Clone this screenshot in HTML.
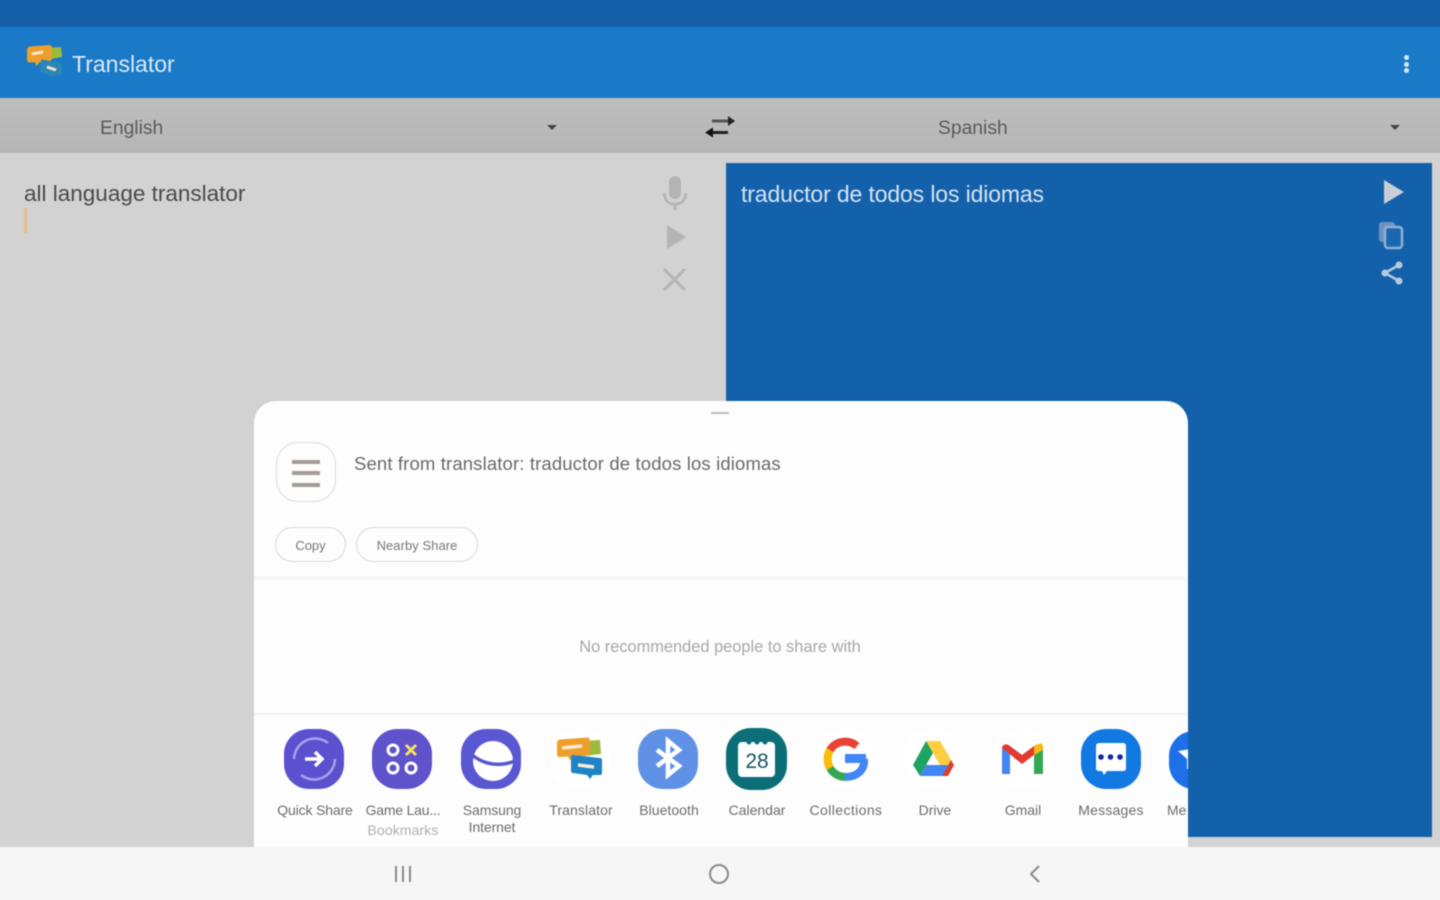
<!DOCTYPE html>
<html>
<head>
<meta charset="utf-8">
<style>
html,body{margin:0;padding:0;width:1440px;height:900px;overflow:hidden;background:#d2d2d2;font-family:"Liberation Sans",sans-serif}
#root{position:relative;width:1440px;height:900px;filter:blur(.65px)}
.a{position:absolute}
.t{position:absolute;white-space:nowrap;line-height:1}
.lbl{position:absolute;font-size:14px;color:#6d6d6d;text-align:center;width:90px;line-height:17px;white-space:nowrap}
</style>
</head>
<body>
<div id="root">
<div class="a" style="left:-10px;top:-10px;width:1460px;height:37px;background:#1560a8"></div>
<div class="a" style="left:-10px;top:27px;width:1460px;height:71px;background:#1a7ac8"></div>
<div class="a" style="left:-10px;top:98px;width:1460px;height:55px;background:linear-gradient(#bdbdbd,#b6b6b8)"></div>
<div class="a" style="left:-10px;top:153px;width:1460px;height:700px;background:#d2d2d2"></div>
<div class="a" style="left:726px;top:163px;width:706px;height:674px;background:#1461ab"></div>

<svg class="a" style="left:24px;top:42px" width="40" height="40" viewBox="0 0 40 40">
<path d="M22 6l15-1 1 10-12 2z" fill="#9abb3c"/>
<path d="M3 8q0-3 3-3.500L25 3q3 0 3 3v10q0 3-3 3l-9 1-4 4-1-4-5 .5q-3 0-3-3z" fill="#ee9f2b"/>
<path d="M17 19q0-2 2-1.500L36 21q2 .5 2 2v8q0 2-2 2h-6l-3 3-2-3-7-2q-2-.5-2-2z" fill="#2b88b4"/>
<path d="M8 12l11-2M23 25l9 3" stroke="#f4e6c8" stroke-width="3" fill="none"/>
</svg>
<div class="t" style="left:72px;top:53px;font-size:23px;color:#dbe9f5">Translator</div>
<div class="a" style="left:1404px;top:55px;width:5px;height:5px;border-radius:50%;background:#d9e6f2"></div>
<div class="a" style="left:1404px;top:62px;width:5px;height:5px;border-radius:50%;background:#d9e6f2"></div>
<div class="a" style="left:1404px;top:68px;width:5px;height:5px;border-radius:50%;background:#d9e6f2"></div>

<div class="t" style="left:100px;top:118.500px;font-size:19.300px;color:#5b5b5b">English</div>
<div class="a" style="left:547px;top:125px;border:5px solid transparent;border-top:5px solid #444;border-bottom:0"></div>
<svg class="a" style="left:702px;top:112px" width="36" height="30" viewBox="0 0 36 30">
<path d="M10 9h20" stroke="#555" stroke-width="3"/><path d="M26 4l7 5-7 5z" fill="#222"/>
<path d="M6 20.500h20" stroke="#222" stroke-width="3"/><path d="M11 15.500l-8 5 8 5z" fill="#111"/>
</svg>
<div class="t" style="left:938px;top:118.500px;font-size:19.300px;color:#5b5b5b">Spanish</div>
<div class="a" style="left:1390px;top:125px;border:5px solid transparent;border-top:5px solid #444;border-bottom:0"></div>

<div class="t" style="left:24px;top:183px;font-size:22.500px;color:#4a4a4a">all language translator</div>
<div class="a" style="left:24px;top:208px;width:3px;height:25px;background:#e8bd86"></div>

<svg class="a" style="left:660px;top:174px" width="30" height="120" viewBox="0 0 30 120" fill="#b4b4b4">
<rect x="9" y="2" width="12" height="23" rx="6"/>
<path d="M4 19q1 11 11 11t11-11" fill="none" stroke="#b4b4b4" stroke-width="2.500"/>
<rect x="13.500" y="29" width="3" height="7"/>
<path d="M7 51l19 12-19 12z"/>
<path d="M4 95l21 21M25 95L4 116" stroke="#b4b4b4" stroke-width="3"/>
</svg>

<div class="t" style="left:741px;top:183px;font-size:23px;color:#d5e3f1;letter-spacing:-.13px">traductor de todos los idiomas</div>
<svg class="a" style="left:1375px;top:175px" width="36" height="115" viewBox="0 0 36 115">
<path d="M9 5l20 12-20 12z" fill="#c9ced6"/>
<rect x="4" y="47" width="16" height="20" rx="3" fill="#6f93bd"/>
<rect x="10" y="52" width="17" height="21" rx="3" fill="#1a68b2" stroke="#8fb0d4" stroke-width="2.500"/>
<path d="M24 90l-14 8 14 8" fill="none" stroke="#b5c9df" stroke-width="2.500"/>
<circle cx="24" cy="90" r="3.500" fill="#b5c9df"/><circle cx="10" cy="98" r="3.500" fill="#b5c9df"/><circle cx="24" cy="106" r="3.500" fill="#b5c9df"/>
</svg>

<!-- sheet -->
<div class="a" style="left:254px;top:401px;width:934px;height:460px;background:#fdfdfd;border-radius:22px 22px 0 0;overflow:hidden">
  <div class="a" style="left:457px;top:11px;width:18px;height:1.500px;background:#bdbdbd"></div>
  <div class="a" style="left:22px;top:41px;width:60px;height:60px;box-sizing:border-box;border:1.500px solid #dcdcdc;border-radius:22px;background:#fdfdfd"></div>
  <div class="a" style="left:38px;top:59px;width:28px;height:3.500px;background:#a39c98"></div>
  <div class="a" style="left:38px;top:70px;width:28px;height:3.500px;background:#a39c98"></div>
  <div class="a" style="left:38px;top:82px;width:28px;height:3.500px;background:#a39c98"></div>
  <div class="t" style="left:100px;top:54px;font-size:18.500px;color:#6a6a6a;letter-spacing:.14px">Sent from translator: traductor de todos los idiomas</div>
  <div class="a" style="left:21px;top:126px;width:71px;height:35px;box-sizing:border-box;border:1.500px solid #dadada;border-radius:18px;text-align:center;font-size:13px;line-height:35px;color:#777">Copy</div>
  <div class="a" style="left:102px;top:126px;width:122px;height:35px;box-sizing:border-box;border:1.500px solid #dadada;border-radius:18px;text-align:center;font-size:13px;line-height:35px;color:#777;letter-spacing:.05px">Nearby Share</div>
  <div class="a" style="left:0;top:175px;width:934px;height:5px;background:#f7f7f7"></div>
  <div class="t" style="left:-1px;width:934px;text-align:center;top:238px;font-size:16.400px;color:#a8a8a8">No recommended people to share with</div>
  <div class="a" style="left:0;top:312px;width:934px;height:1.500px;background:#efefef"></div>
</div>

<!-- app icons -->
<div class="a" style="left:254px;top:714px;width:934px;height:136px;overflow:hidden">
<svg class="a" style="left:0;top:0" width="934" height="136" viewBox="254 714 934 136">
  <!-- quick share -->
  <rect x="284" y="729" width="60" height="60" rx="25" fill="#5b51cf"/>
  <path d="M294 759a21 21 0 0 1 34-16M335 759a21 21 0 0 1-34 16" fill="none" stroke="#a8a2ec" stroke-width="2.500"/>
  <path d="M305 759h17M315 752l7 7-7 7" fill="none" stroke="#fff" stroke-width="3.500"/>
  <!-- game launcher -->
  <rect x="372" y="729" width="60" height="60" rx="25" fill="#5f53cc"/>
  <circle cx="393" cy="750" r="5" fill="none" stroke="#fff" stroke-width="3"/>
  <circle cx="393" cy="768" r="5" fill="none" stroke="#fff" stroke-width="3"/>
  <circle cx="411" cy="768" r="5" fill="none" stroke="#fff" stroke-width="3"/>
  <path d="M406 745l10 10M416 745l-10 10" stroke="#f2e45c" stroke-width="3"/>
  <!-- internet -->
  <rect x="461" y="729" width="60" height="60" rx="25" fill="#5a57d2"/>
  <circle cx="493" cy="761" r="20" fill="#fff"/>
  <path d="M471 754c10 9 26 14 44 7" fill="none" stroke="#5a57d2" stroke-width="3.500"/>
  <path d="M505 740l10 0 0 10z" fill="#5a57d2"/>
  <!-- translator -->
  <circle cx="580" cy="759" r="30" fill="#fff"/>
  <path d="M584 741l16-1 1 14-17 2z" fill="#9abb3c"/>
  <path d="M557 743q0-3 3-3.500l27-2q3 0 3 3v12q0 3-3 3l-14 1-3 4-2-4-8 .5q-3 0-3-3z" fill="#ee9f2b"/>
  <path d="M571 757q0-2 2-2l27 3q2 0 2 2v13q0 2-2 2h-7l-3 4-3-4-14-2q-2 0-2-2z" fill="#1f84c6"/>
  <path d="M562 748l20-2M578 765l16 2" stroke="#f6ecd5" stroke-width="3.500"/>
  <!-- bluetooth -->
  <rect x="638" y="729" width="60" height="60" rx="25" fill="#5f92e6"/>
  <path d="M657 750l22 16-11 9v-34l11 9-22 16" fill="none" stroke="#fff" stroke-width="4.500"/>
  <!-- calendar -->
  <rect x="726" y="728" width="61" height="62" rx="25" fill="#0c6f78"/>
  <rect x="738" y="742" width="37" height="35" rx="4" fill="#fff"/>
  <circle cx="749" cy="742" r="2.500" fill="#0c6f78"/><circle cx="757" cy="742" r="2.500" fill="#0c6f78"/><circle cx="765" cy="742" r="2.500" fill="#0c6f78"/>
  <text x="757" y="768" font-family="Liberation Sans" font-size="21" fill="#14575f" text-anchor="middle">28</text>
  <!-- G -->
  <circle cx="845" cy="759" r="30" fill="#fff"/>
  <rect x="845" y="754" width="21" height="9" fill="#4285f4"/>
  <path d="M864 759c1 12-8 18-19 18" fill="none" stroke="#4285f4" stroke-width="8"/>
  <path d="M845 777a18 18 0 0 1-15-9" fill="none" stroke="#34a853" stroke-width="8"/>
  <path d="M830 768a18 18 0 0 1 0-18" fill="none" stroke="#fbbc05" stroke-width="8"/>
  <path d="M830 750a18 18 0 0 1 27-4" fill="none" stroke="#ea4335" stroke-width="8"/>
  <!-- drive -->
  <circle cx="933" cy="759" r="30" fill="#fff"/>
  <path d="M926 741l-13 24 7 11 14-25z" fill="#1fa463"/>
  <path d="M926 741h14l14 24h-14z" fill="#ffcd40"/>
  <path d="M920 776h28l6-11h-28z" fill="#4285f4"/>
  <path d="M948 776l6-11-3-5-9 16z" fill="#d93f2f"/>
  <!-- gmail -->
  <circle cx="1022" cy="759" r="30" fill="#fff"/>
  <path d="M1002 748v26h8v-20z" fill="#4285f4"/>
  <path d="M1034 754v20h9v-26z" fill="#34a853"/>
  <path d="M1002 748l20 16 21-16v-1q-3-5-9-1l-12 9-12-9q-5-4-8 1z" fill="#e13a2e"/>
  <path d="M1034 746l7-3q3 3 2 7l-9 5z" fill="#f5bb12"/>
  <!-- messages -->
  <rect x="1081" y="729" width="60" height="60" rx="25" fill="#1279e3"/>
  <path d="M1096 746q0-3 3-3h24q3 0 3 3v22q0 3-3 3h-16l-3 4-2-4h-3q-3 0-3-3z" fill="#fff"/>
  <circle cx="1101" cy="757" r="2.800" fill="#102a9c"/><circle cx="1110.500" cy="757" r="2.800" fill="#102a9c"/><circle cx="1120" cy="757" r="2.800" fill="#102a9c"/>
  <!-- partial -->
  <rect x="1169" y="731" width="58" height="58" rx="25" fill="#1d70e8"/>
  <path d="M1178 751l9 8v10h4v-20" fill="#fff"/>
</svg>
<div class="lbl" style="left:16px;top:88px;letter-spacing:-.15px">Quick Share</div>
<div class="lbl" style="left:104px;top:88px;letter-spacing:-.2px">Game Lau...</div>
<div class="lbl" style="left:104px;top:108px;color:#b0b0b0;font-size:14px;letter-spacing:.1px">Bookmarks</div>
<div class="lbl" style="left:193px;top:88px;letter-spacing:-.1px">Samsung<br>Internet</div>
<div class="lbl" style="left:282px;top:88px;letter-spacing:.1px">Translator</div>
<div class="lbl" style="left:370px;top:88px;letter-spacing:.05px">Bluetooth</div>
<div class="lbl" style="left:458px;top:88px">Calendar</div>
<div class="lbl" style="left:547px;top:88px;letter-spacing:.4px">Collections</div>
<div class="lbl" style="left:636px;top:88px">Drive</div>
<div class="lbl" style="left:724px;top:88px">Gmail</div>
<div class="lbl" style="left:812px;top:88px;letter-spacing:.2px">Messages</div>
<div class="lbl" style="left:913px;top:88px;width:auto;text-align:left">Me</div>
</div>

<!-- nav -->
<div class="a" style="left:-10px;top:847px;width:1460px;height:63px;background:#f6f6f6"></div>
<div class="a" style="left:395px;top:866px;width:2px;height:16px;background:#8a8a8a"></div>
<div class="a" style="left:402px;top:866px;width:2px;height:16px;background:#8a8a8a"></div>
<div class="a" style="left:409px;top:866px;width:2px;height:16px;background:#8a8a8a"></div>
<div class="a" style="left:709px;top:864px;width:20px;height:20px;box-sizing:border-box;border:2px solid #8a8a8a;border-radius:50%"></div>
<svg class="a" style="left:1026px;top:864px" width="18" height="20" viewBox="0 0 18 20"><path d="M13 2L5 10l8 8" fill="none" stroke="#8a8a8a" stroke-width="2"/></svg>
</div>
</body>
</html>
